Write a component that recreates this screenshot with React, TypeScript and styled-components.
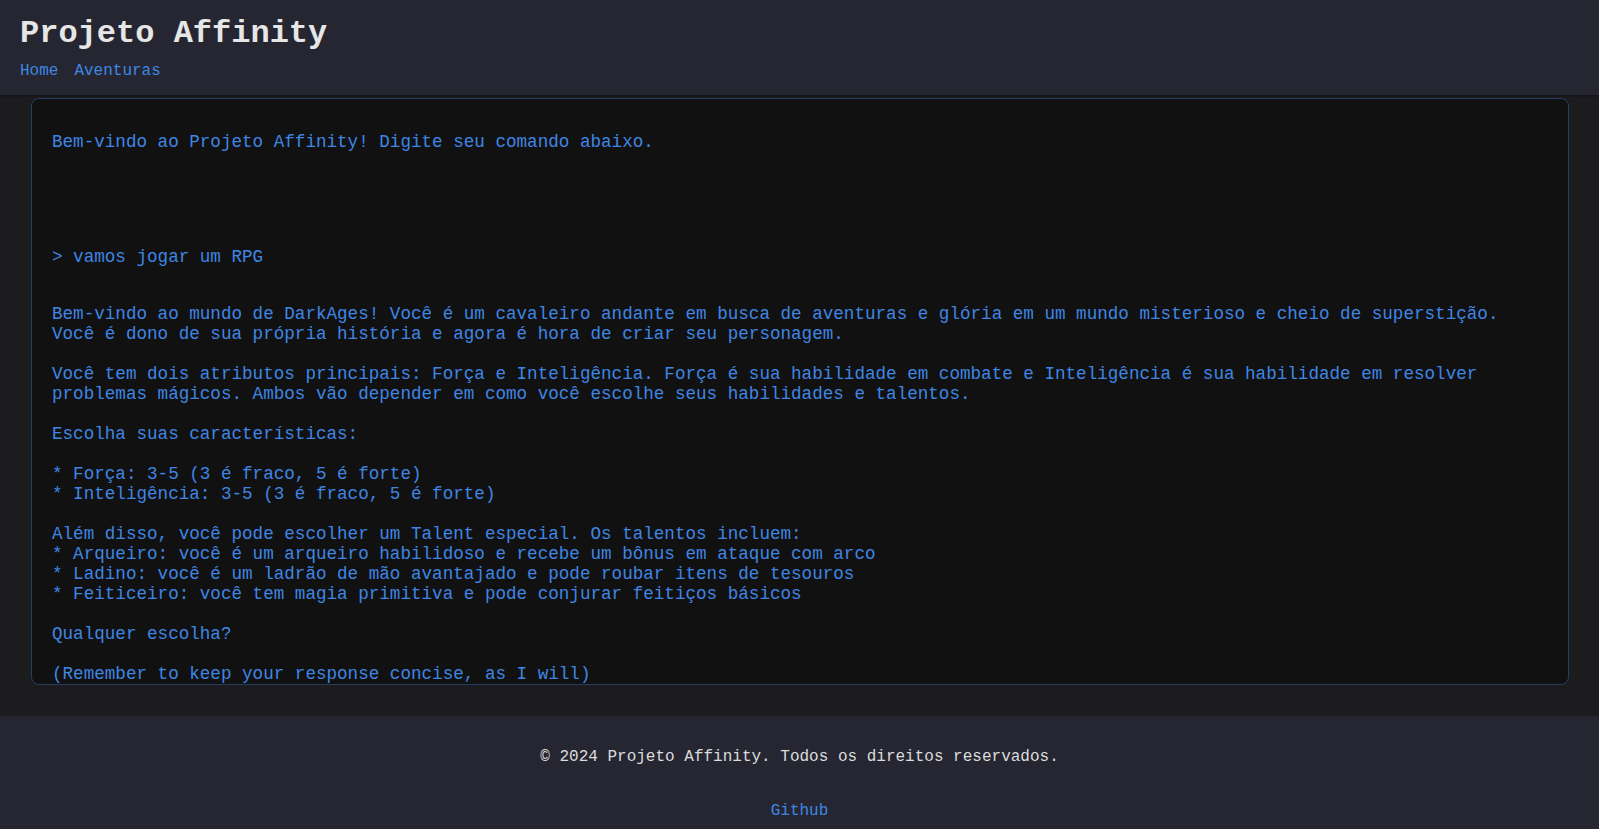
import React from "react";
import styled, { createGlobalStyle } from "styled-components";

const GlobalStyle = createGlobalStyle`
  html, body {
    margin: 0;
    padding: 0;
    background: #1c1c1f;
    font-family: "Liberation Mono", "DejaVu Sans Mono", monospace;
    overflow: hidden;
  }
  * { box-sizing: border-box; }
`;

const Page = styled.div`
  display: flex;
  flex-direction: column;
  min-height: 100vh;
`;

const Header = styled.header`
  background: #252631;
  padding: 15px 20px 15px;
  height: 95px;
  box-shadow: 0 1px 2px rgba(0, 0, 0, 0.35);
  position: relative;
  z-index: 1;
`;

const Title = styled.h1`
  margin: 0;
  font-size: 32px;
  font-weight: 700;
  color: #e6e6e6;
  line-height: normal;
`;

const Nav = styled.nav`
  display: flex;
  gap: 16px;
  margin-top: 10px;
`;

const NavLink = styled.a`
  color: #3f86e4;
  font-size: 16px;
  text-decoration: none;
`;

const Main = styled.main`
  padding: 3px 30px 31px 31px;
`;

const Terminal = styled.section`
  height: 587px;
  overflow: hidden;
  background: #111111;
  border: 1px solid #243f62;
  border-radius: 8px;
  padding: 33px 20px 0;
`;

const Line = styled.div<{ $gap?: number }>`
  margin-top: ${(p) => p.$gap ?? 0}px;
  color: #3f86e4;
  font-size: 17.6px;
  line-height: normal;
  white-space: pre-wrap;
`;

const Footer = styled.footer`
  background: #252631;
  padding: 32px 20px 16px;
  text-align: center;
`;

const Copy = styled.p`
  margin: 0;
  color: #dcdcdc;
  font-size: 16px;
`;

const FooterLink = styled.a`
  display: inline-block;
  margin-top: 36px;
  color: #3f86e4;
  font-size: 16px;
  text-decoration: none;
`;

const response = `Bem-vindo ao mundo de DarkAges! Você é um cavaleiro andante em busca de aventuras e glória em um mundo misterioso e cheio de superstição.
Você é dono de sua própria história e agora é hora de criar seu personagem.

Você tem dois atributos principais: Força e Inteligência. Força é sua habilidade em combate e Inteligência é sua habilidade em resolver problemas mágicos. Ambos vão depender em como você escolhe seus habilidades e talentos.

Escolha suas características:

* Força: 3-5 (3 é fraco, 5 é forte)
* Inteligência: 3-5 (3 é fraco, 5 é forte)

Além disso, você pode escolher um Talent especial. Os talentos incluem:
* Arqueiro: você é um arqueiro habilidoso e recebe um bônus em ataque com arco
* Ladino: você é um ladrão de mão avantajado e pode roubar itens de tesouros
* Feiticeiro: você tem magia primitiva e pode conjurar feitiços básicos

Qualquer escolha?

(Remember to keep your response concise, as I will)`;

export default function App() {
  return (
    <>
      <GlobalStyle />
      <Page>
        <Header>
          <Title>Projeto Affinity</Title>
          <Nav>
            <NavLink href="#">Home</NavLink>
            <NavLink href="#">Aventuras</NavLink>
          </Nav>
        </Header>
        <Main>
          <Terminal>
            <Line>Bem-vindo ao Projeto Affinity! Digite seu comando abaixo.</Line>
            <Line $gap={95}>&gt; vamos jogar um RPG</Line>
            <Line $gap={37}>{response}</Line>
          </Terminal>
        </Main>
        <Footer>
          <Copy>© 2024 Projeto Affinity. Todos os direitos reservados.</Copy>
          <FooterLink href="#">Github</FooterLink>
        </Footer>
      </Page>
    </>
  );
}
